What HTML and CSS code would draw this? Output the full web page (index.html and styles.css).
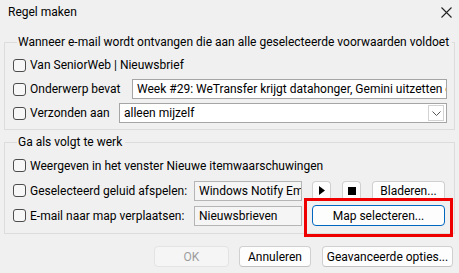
FILE: index.html
```html
<!DOCTYPE html>
<html lang="nl">
<head>
<meta charset="utf-8">
<title>Regel maken</title>
<link rel="stylesheet" href="styles.css">
</head>
<body>
<div class="dialog">
  <div class="titlebar">
    <span class="title">Regel maken</span>
    <svg class="close" width="11" height="11" viewBox="0 0 11 11"><path d="M0.5 0.5 L10.5 10.5 M10.5 0.5 L0.5 10.5" stroke="#222" stroke-width="1.1" fill="none"/></svg>
  </div>

  <fieldset class="group g1">
    <legend>Wanneer e-mail wordt ontvangen die aan alle geselecteerde voorwaarden voldoet</legend>
    <div class="row">
      <span class="cb"></span><span class="lbl">Van SeniorWeb | Nieuwsbrief</span>
    </div>
    <div class="row">
      <span class="cb"></span><span class="lbl">Onderwerp bevat</span>
      <div class="field subject">Week #29: WeTransfer krijgt datahonger, Gemini uitzetten en</div>
    </div>
    <div class="row">
      <span class="cb"></span><span class="lbl">Verzonden aan</span>
      <div class="field combo">alleen mijzelf
        <span class="drop"><svg width="9" height="5" viewBox="0 0 9 5"><path d="M0.5 0.5 L4.5 4.5 L8.5 0.5" stroke="#555" stroke-width="1" fill="none"/></svg></span>
      </div>
    </div>
  </fieldset>

  <fieldset class="group g2">
    <legend>Ga als volgt te werk</legend>
    <div class="row">
      <span class="cb"></span><span class="lbl">Weergeven in het venster Nieuwe itemwaarschuwingen</span>
    </div>
    <div class="row">
      <span class="cb"></span><span class="lbl fixed">Geselecteerd geluid afspelen:</span>
      <div class="field ro">Windows Notify Em</div>
      <button class="btn icon"><svg width="6" height="9" viewBox="0 0 6 9"><path d="M0 0 L6 4.5 L0 9 Z" fill="#000"/></svg></button>
      <button class="btn icon"><svg width="8" height="8" viewBox="0 0 8 8"><rect width="8" height="8" fill="#000"/></svg></button>
      <button class="btn browse">Bladeren...</button>
    </div>
    <div class="row">
      <span class="cb"></span><span class="lbl fixed">E-mail naar map verplaatsen:</span>
      <div class="field ro">Nieuwsbrieven</div>
      <button class="btn primary">Map selecteren...</button>
    </div>
  </fieldset>

  <div class="actions">
    <button class="btn ok" disabled>OK</button>
    <button class="btn cancel">Annuleren</button>
    <button class="btn adv">Geavanceerde opties...</button>
  </div>

  <div class="highlight"></div>
</div>
</body>
</html>
```

FILE: styles.css
```css
* { box-sizing: border-box; }
html, body { margin: 0; padding: 0; }
body {
  background: #f0f0f0;
  font-family: Roboto, "Noto Sans", sans-serif;
  font-size: 12px;
  color: #000;
}
.dialog {
  position: relative;
  width: 459px;
  height: 273px;
  background: #f0f0f0;
  overflow: hidden;
}
.titlebar {
  height: 34px;
  padding: 4px 8px 0 8px;
  display: flex;
  justify-content: space-between;
  align-items: flex-start;
  line-height: 16px;
}
.title { display: block; }
.close { margin-top: 3px; margin-right: -1px; }

.group {
  margin: 0 4px;
  padding: 0 7px 4px 8px;
  border: 1px solid #dcdcdc;
  min-width: 0;
}
.group legend {
  margin-left: 4px;
  padding: 0 3px 0 1px;
  line-height: 16px;
  white-space: nowrap;
}
.g1 { padding-top: 3px; padding-bottom: 4px; }
.g2 { margin-top: 4px; padding-top: 3px; padding-bottom: 5px; }

.row {
  display: flex;
  align-items: center;
  height: 24px;
}
.g2 .row { height: 25px; }

.cb {
  width: 13px;
  height: 13px;
  border: 1px solid #4d4d4d;
  border-radius: 3px;
  background: #f7f7f7;
  flex: none;
}
.lbl { margin-left: 4px; white-space: nowrap; }
.lbl.fixed { width: 164px; flex: none; }

.field {
  height: 20px;
  border: 1px solid #a5a5a5;
  background: #fff;
  padding: 0 4px;
  line-height: 18px;
  white-space: nowrap;
  overflow: hidden;
  flex: none;
}
.subject { margin-left: auto; width: 315px; }
.combo {
  margin-left: auto;
  width: 328px;
  position: relative;
  display: flex;
  align-items: center;
  justify-content: space-between;
  padding-right: 2px;
}
.drop {
  width: 16px;
  height: 16px;
  border: 1px solid #d3d3d3;
  background: #fff;
  display: flex;
  align-items: center;
  justify-content: center;
}
.ro {
  width: 108px;
  background: #f5f5f5;
  border-color: #b5b5b5;
}

.btn {
  font-family: inherit;
  font-size: 12px;
  color: #000;
  height: 20px;
  padding: 0;
  border: 1px solid #d0d0d0;
  border-bottom-color: #c2c2c2;
  border-radius: 4px;
  background: #fdfdfd;
  display: flex;
  align-items: center;
  justify-content: center;
  line-height: 18px;
  flex: none;
}
.icon { width: 19px; margin-left: 10px; }
.icon + .icon { margin-left: 11px; }
.browse { width: 73px; margin-left: 11px; }
.primary {
  width: 133px;
  height: 21px;
  margin-left: 10px;
  border-color: #0067c0;
  border-bottom-color: #0067c0;
}

.actions {
  display: flex;
  justify-content: flex-end;
  gap: 10px;
  padding: 12px 6px 0 0;
}
.actions .btn { height: 21px; }
.ok {
  width: 75px;
  color: #9d9d9d;
  background: #f5f5f5;
  border-color: #e3e3e3;
}
.cancel { width: 72px; }
.adv { width: 131px; margin-left: 1px; }

.highlight {
  position: absolute;
  left: 304px;
  top: 198px;
  width: 149px;
  height: 39px;
  border: 3px solid #ee0000;
}
```
